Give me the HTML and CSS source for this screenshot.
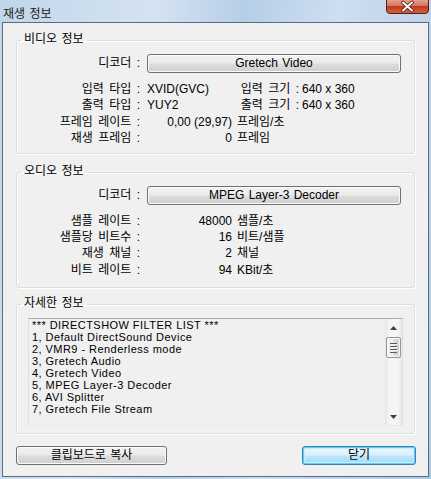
FILE: index.html
```html
<!DOCTYPE html>
<html lang="ko">
<head>
<meta charset="utf-8">
<title>재생 정보</title>
<link rel="stylesheet" href="styles.css">
</head>
<body>
<div class="window">
  <div class="titlebar">
    <span class="title">재생 정보</span>
    <span class="close">
      <svg width="43" height="14" viewBox="0 0 43 14">
        <defs>
          <linearGradient id="cg" x1="0" y1="0" x2="0" y2="1">
            <stop offset="0" stop-color="#e9a793"/>
            <stop offset="0.45" stop-color="#d8775f"/>
            <stop offset="0.5" stop-color="#c1391f"/>
            <stop offset="1" stop-color="#d8633f"/>
          </linearGradient>
        </defs>
        <path d="M0.5 -1 V10 Q0.5 13.5 4 13.5 H39 Q42.5 13.5 42.5 10 V-1 Z" fill="url(#cg)" stroke="#5a1c12"/>
        <path d="M17 2.5 L26 10.5 M26 2.5 L17 10.5" stroke="#4a1a12" stroke-width="3.6" stroke-linecap="round"/>
        <path d="M17 2.5 L26 10.5 M26 2.5 L17 10.5" stroke="#ffffff" stroke-width="2" stroke-linecap="round"/>
      </svg>
    </span>
  </div>
  <div class="client">
    <fieldset class="group group-video">
      <legend>비디오 정보</legend>
      <div class="row">
        <span class="lbl">디코더 :</span>
        <button class="btn decoder">Gretech Video</button>
      </div>
      <div class="rows">
        <div class="row">
          <span class="lbl">입력 타입 :</span>
          <span class="val w1">XVID(GVC)</span>
          <span class="lbl2">입력 크기 :</span>
          <span class="val2">640 x 360</span>
        </div>
        <div class="row">
          <span class="lbl">출력 타입 :</span>
          <span class="val w1">YUY2</span>
          <span class="lbl2">출력 크기 :</span>
          <span class="val2">640 x 360</span>
        </div>
        <div class="row">
          <span class="lbl">프레임 레이트 :</span>
          <span class="num">0,00 (29,97)</span>
          <span class="unit">프레임/초</span>
        </div>
        <div class="row">
          <span class="lbl">재생 프레임 :</span>
          <span class="num">0</span>
          <span class="unit">프레임</span>
        </div>
      </div>
    </fieldset>

    <fieldset class="group group-audio">
      <legend>오디오 정보</legend>
      <div class="row">
        <span class="lbl">디코더 :</span>
        <button class="btn decoder">MPEG Layer-3 Decoder</button>
      </div>
      <div class="rows">
        <div class="row">
          <span class="lbl">샘플 레이트 :</span>
          <span class="num">48000</span>
          <span class="unit">샘플/초</span>
        </div>
        <div class="row">
          <span class="lbl">샘플당 비트수 :</span>
          <span class="num">16</span>
          <span class="unit">비트/샘플</span>
        </div>
        <div class="row">
          <span class="lbl">재생 채널 :</span>
          <span class="num">2</span>
          <span class="unit">채널</span>
        </div>
        <div class="row">
          <span class="lbl">비트 레이트 :</span>
          <span class="num">94</span>
          <span class="unit">KBit/초</span>
        </div>
      </div>
    </fieldset>

    <fieldset class="group group-detail">
      <legend>자세한 정보</legend>
      <div class="list">
        <div class="list-text">
          <div>*** DIRECTSHOW FILTER LIST ***</div>
          <div>1, Default DirectSound Device</div>
          <div>2, VMR9 - Renderless mode</div>
          <div>3, Gretech Audio</div>
          <div>4, Gretech Video</div>
          <div>5, MPEG Layer-3 Decoder</div>
          <div>6, AVI Splitter</div>
          <div>7, Gretech File Stream</div>
        </div>
        <div class="scrollbar">
          <div class="arrow">
            <svg width="7" height="4" viewBox="0 0 7 4"><polygon points="0,4 7,4 3.5,0" fill="#404040"/></svg>
          </div>
          <div class="thumb"><span class="grip"></span></div>
          <div class="track"></div>
          <div class="arrow">
            <svg width="7" height="4" viewBox="0 0 7 4"><polygon points="0,0 7,0 3.5,4" fill="#404040"/></svg>
          </div>
        </div>
      </div>
    </fieldset>

    <div class="footer">
      <button class="btn copy">클립보드로 복사</button>
      <button class="btn btn-default">닫기</button>
    </div>
  </div>
</div>
</body>
</html>
```
FILE: styles.css
```css
html, body {
  margin: 0;
  padding: 0;
}
body {
  font-family: "Liberation Sans", "Noto Sans CJK KR", sans-serif;
  font-size: 12px;
  color: #000;
  background: #b3cbe4;
}
.window {
  width: 431px;
  height: 479px;
  display: flex;
  flex-direction: column;
  background: linear-gradient(100deg, #c2d6ea 0%, #d4e3f2 30%, #b6cee7 48%, #cddff0 66%, #b0c9e3 100%);
}
.titlebar {
  height: 22px;
  display: flex;
  align-items: flex-start;
  flex: none;
}
.title {
  margin: 6px 0 0 3px;
  line-height: 16px;
  font-size: 12px;
  color: #1a1a1a;
  word-spacing: 1px;
}
.close {
  margin-left: auto;
  margin-right: 2px;
  width: 43px;
  height: 14px;
  display: block;
}
.close svg { display: block; }

.client {
  margin: 0 2px;
  height: 455px;
  box-sizing: border-box;
  border: 1px solid #5a6c80;
  background: #f0f0f0;
  padding: 0 13px;
  display: flex;
  flex-direction: column;
}

.group {
  margin: 0;
  padding: 5px 0 6px 0;
  border: 1px solid #d5dfe5;
  border-radius: 3px;
  box-shadow: inset 1px 1px 0 #fff, 1px 1px 0 #fff;
  min-width: 0;
}
.group legend {
  margin-left: 4px;
  padding: 0 3px 3px;
  line-height: 14px;
  font-size: 12px;
  word-spacing: 1px;
}
.group-video { margin-top: 9px; padding-bottom: 6px; }
.group-audio { margin-top: 10px; padding-bottom: 9px; }
.group-detail { margin-top: 8px; padding-bottom: 7px; }

.row {
  display: flex;
  align-items: center;
  line-height: 16.4px;
  white-space: nowrap;
}
.rows {
  margin-top: 8px;
}
.lbl {
  width: 123px;
  text-align: right;
  flex: none;
  word-spacing: 2px;
}
.val {
  margin-left: 7px;
}
.w1 {
  width: 85px;
  flex: none;
}
.lbl2 {
  width: 67px;
  text-align: right;
  flex: none;
  word-spacing: 2px;
}
.val2 {
  margin-left: 3px;
}
.num {
  margin-left: 7px;
  width: 85px;
  text-align: right;
  flex: none;
}
.unit {
  margin-left: 5px;
}

.btn {
  font-family: "Liberation Sans", "Noto Sans CJK KR", sans-serif;
  font-size: 12px;
  color: #000;
  height: 19px;
  padding: 0;
  line-height: 15px;
  border: 1px solid #707070;
  border-radius: 3px;
  background: linear-gradient(#f2f2f2 0%, #ebebeb 48%, #dddddd 52%, #cfcfcf 100%);
  box-shadow: inset 0 0 0 1px #fbfbfb;
  box-sizing: border-box;
  word-spacing: 1px;
}
.decoder {
  margin-left: 7px;
  width: 254px;
}

.list {
  margin-left: 11px;
  width: 375px;
  height: 108px;
  box-sizing: border-box;
  border: 1px solid #abadb3;
  border-left-color: #dbdfe6;
  border-right-color: #dbdfe6;
  border-bottom-color: #e3e9ef;
  background: #f0f0f0;
  display: flex;
}
.list-text {
  flex: 1;
  padding: 1px 0 0 3px;
  line-height: 11.9px;
  font-size: 11px;
  letter-spacing: 0.45px;
  overflow: hidden;
  white-space: nowrap;
}
.scrollbar {
  width: 17px;
  flex: none;
  display: flex;
  flex-direction: column;
  background: linear-gradient(to right, #e6e6e6, #f5f5f5 25%, #f5f5f5 75%, #e6e6e6);
}
.arrow {
  height: 17px;
  display: flex;
  align-items: center;
  justify-content: center;
}
.arrow svg { display: block; }
.thumb {
  margin: 1px 1px 0 1px;
  height: 21px;
  box-sizing: border-box;
  border: 1px solid #969696;
  border-radius: 2px;
  background: linear-gradient(to right, #f6f6f6, #ececec 50%, #dcdcdc 55%, #d2d2d2);
  box-shadow: inset 0 0 0 1px #fafafa;
  display: flex;
  align-items: center;
  justify-content: center;
}
.grip {
  width: 7px;
  height: 10px;
  background: repeating-linear-gradient(#5a5a5a 0 1px, #f4f4f4 1px 2px, transparent 2px 3px);
}
.track { flex: 1; }

.footer {
  margin-top: 12px;
  margin-right: -1px;
  display: flex;
  justify-content: space-between;
}
.copy {
  width: 151px;
}
.btn-default {
  width: 114px;
  border-color: #3c7fb1;
  background: linear-gradient(#eaf6fd 0%, #d9f0fc 48%, #bee6fd 52%, #a7d9f5 100%);
  box-shadow: inset 0 0 0 1px #5ecff8, inset 0 0 0 2px #c6ecfc;
}
```
